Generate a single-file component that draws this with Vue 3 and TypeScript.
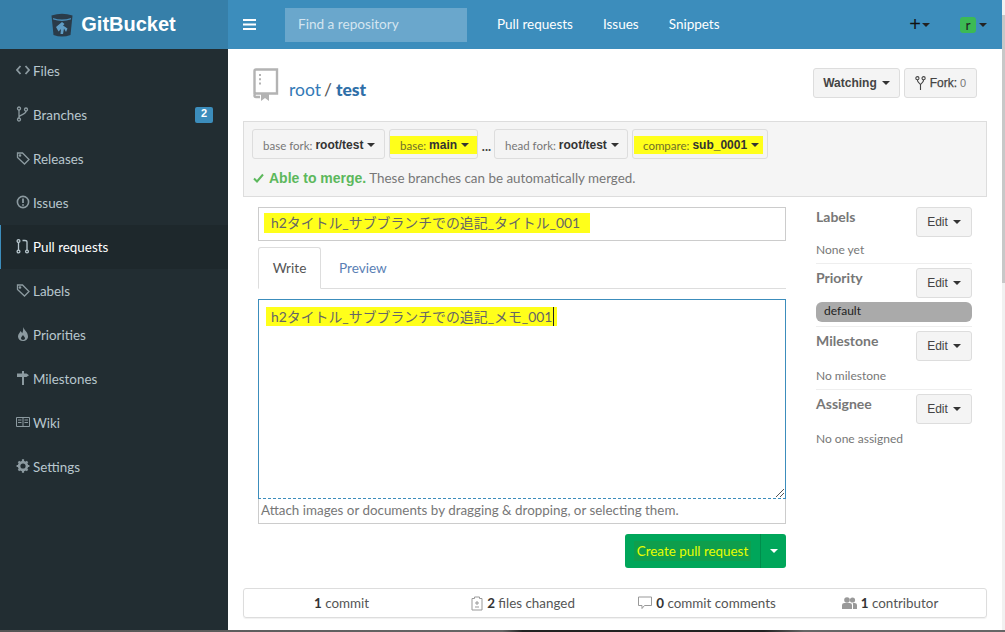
<script setup lang="ts">
const nav = [
  { key: 'code', label: 'Files' },
  { key: 'branch', label: 'Branches', badge: '2' },
  { key: 'tag', label: 'Releases' },
  { key: 'issue', label: 'Issues' },
  { key: 'pr', label: 'Pull requests', active: true },
  { key: 'tag', label: 'Labels' },
  { key: 'flame', label: 'Priorities' },
  { key: 'sign', label: 'Milestones' },
  { key: 'book', label: 'Wiki' },
  { key: 'gear', label: 'Settings' },
]
</script>

<template>
  <div class="page">
    <aside class="side">
      <div class="logo">
        <svg class="bucket" width="22" height="24" viewBox="0 0 22 24">
          <path d="M0.5 2.5 Q11 -1 21.5 2.5 L19.5 22 Q11 25 2.5 22 Z" fill="#2a3b49" />
          <path d="M2 5 Q11 8 20 5 L19.8 6.6 Q11 9.4 2.2 6.6 Z" fill="#4a8db8" />
          <path d="M5 14 L11 9 L13.5 11 L12 12.5 L16.5 15.5 L15 19 L13 15.5 L12 21 L9.5 21 L10 16 L7.5 18.5 Z" fill="#5f9cc4" />
        </svg>
        <span class="brand">GitBucket</span>
      </div>
      <nav class="nav">
        <a v-for="n in nav" :key="n.label" class="item" :class="{ active: n.active }">
          <svg class="ico" width="14" height="16" viewBox="0 0 14 16" fill="none" stroke="currentColor" stroke-width="1.3">
            <template v-if="n.key === 'code'">
              <path d="M4.5 4 L1 8 L4.5 12 M9.5 4 L13 8 L9.5 12" stroke-width="1.8" />
            </template>
            <template v-else-if="n.key === 'branch'">
              <circle cx="3" cy="2.5" r="1.5" /><circle cx="3" cy="13.5" r="1.5" /><circle cx="10" cy="3.5" r="1.5" />
              <path d="M3 4 V12 M10 5 C10 9 4 8 3 11" />
            </template>
            <template v-else-if="n.key === 'tag'">
              <path d="M1.5 3 H6.5 L13 9.5 L8.5 14 L1.5 7.5 Z" />
              <circle cx="4" cy="5.5" r="0.7" />
            </template>
            <template v-else-if="n.key === 'issue'">
              <circle cx="7" cy="8" r="5.6" stroke-width="1.6" />
              <path d="M7 4.5 V9 M7 10.2 V11.8" stroke-width="1.8" />
            </template>
            <template v-else-if="n.key === 'pr'">
              <circle cx="2.5" cy="3" r="1.4" /><circle cx="2.5" cy="13.5" r="1.4" /><circle cx="11" cy="13.5" r="1.4" />
              <path d="M2.5 4.5 V12 M11 12 V4 Q11 2.5 9 2.5 H6.5" />
            </template>
            <template v-else-if="n.key === 'flame'">
              <path d="M7 1 C8 4 12 6 12 10.5 C12 13 10 15 7 15 C4 15 2 13 2 10.5 C2 8 4 7 4.5 5 C5.5 6 6 6.5 6 7.5 C7 6 7.5 3 7 1 Z M7 9 C6 10.5 5 11 5 12.3 C5 13.5 6 14 7 14 C8 14 9 13.5 9 12.3 C9 11 7.8 10.5 7 9 Z" fill="currentColor" fill-rule="evenodd" stroke="none" />
            </template>
            <template v-else-if="n.key === 'sign'">
              <path d="M1 3.5 H10.5 L13 5.2 L10.5 7 H1 Z M6 1 H8 V3.5 H6 Z M6 7 H8 V15 H6 Z" fill="currentColor" stroke="none" />
            </template>
            <template v-else-if="n.key === 'book'">
              <path d="M0.5 3.5 H13.5 V12.5 H0.5 Z M7 3.5 V12.5 M2 6 H5.5 M2 8.5 H5.5 M8.5 6 H12 M8.5 8.5 H12" stroke-width="1" />
            </template>
            <template v-else-if="n.key === 'gear'">
              <circle cx="7" cy="8" r="3.9" stroke-width="2.6" />
              <path d="M7 1.2 V3.2 M7 12.8 V14.8 M0.6 8 H2.6 M11.4 8 H13.4 M2.5 3.5 L3.8 4.8 M10.2 11.2 L11.5 12.5 M2.5 12.5 L3.8 11.2 M10.2 4.8 L11.5 3.5" stroke-width="2.2" />
            </template>
          </svg>
          <span class="label">{{ n.label }}</span>
          <span v-if="n.badge" class="badge">{{ n.badge }}</span>
        </a>
      </nav>
    </aside>

    <div class="right">
      <header class="top">
        <svg class="burger" width="13" height="11" viewBox="0 0 13 11"><path d="M0 1 H13 M0 5.5 H13 M0 10 H13" stroke="#fff" stroke-width="2" /></svg>
        <div class="search">Find a repository</div>
        <a class="tl first">Pull requests</a>
        <a class="tl">Issues</a>
        <a class="tl">Snippets</a>
        <span class="spacer"></span>
        <span class="plus">+</span><i class="caret dark plusc"></i>
        <span class="avatar">r</span><i class="caret dark"></i>
      </header>

      <main class="main">
        <div class="repo">
          <svg class="repoicon" width="26" height="33" viewBox="0 0 26 33" fill="none">
            <path d="M1.5 26 V3 Q1.5 1.5 3 1.5 H24 V25.5 H3 Q1.5 25.5 1.5 27.5 Q1.5 29 3 29 H7" stroke="#b3b3b3" stroke-width="2.4" />
            <path d="M7 6 V18" stroke="#b3b3b3" stroke-width="2" stroke-dasharray="2 2.2" />
            <path d="M8 26 H16 V33 L12 30 L8 33 Z" fill="#b3b3b3" />
          </svg>
          <div class="repotitle"><a class="owner">root</a><span class="sl">/</span><a class="name">test</a></div>
          <span class="spacer"></span>
          <div class="btn small-b watching">Watching <i class="caret"></i></div>
          <div class="btn small-b fork">
            <svg width="11" height="14" viewBox="0 0 11 14" fill="none" stroke="#444" stroke-width="1.1"><circle cx="2.4" cy="2.2" r="1.6" /><circle cx="8.6" cy="2.2" r="1.6" /><path d="M2.4 4 C2.4 7 5.5 7 5.5 9 V14 M8.6 4 C8.6 7 5.5 7 5.5 9" /></svg>
            <span class="forkt">Fork:</span><span class="forkn">0</span>
          </div>
        </div>

        <section class="compare">
          <div class="branches">
            <div class="btn cb w133"><span class="lite">base fork:</span> <b>root/test</b> <i class="caret"></i></div>
            <div class="btn cb w89 hl-wrap"><span class="hl"><span class="lite">base:</span> <b>main</b> <i class="caret"></i></span></div>
            <span class="dots">...</span>
            <div class="btn cb w134"><span class="lite">head fork:</span> <b>root/test</b> <i class="caret"></i></div>
            <div class="btn cb w136 hl-wrap"><span class="hl"><span class="lite">compare:</span> <b>sub_0001</b> <i class="caret"></i></span></div>
          </div>
          <div class="merge">
            <svg width="11" height="10" viewBox="0 0 11 10"><path d="M1 5.5 L4 8.5 L10 1.5" fill="none" stroke="#5cb85c" stroke-width="2" /></svg>
            <b class="ok">Able to merge.</b> <span class="mt">These branches can be automatically merged.</span>
          </div>
        </section>

        <div class="columns">
          <div class="form">
            <div class="titlebox"><span class="yellow titlehl">h2タイトル_サブブランチでの追記_タイトル_001</span></div>
            <div class="tabs">
              <div class="tab on">Write</div>
              <div class="tab prev">Preview</div>
            </div>
            <div class="area">
              <span class="yellow bodyhl">h2タイトル_サブブランチでの追記_メモ_001<i class="cursor"></i></span>
              <svg class="grip" width="10" height="10" viewBox="0 0 10 10"><path d="M1 9 L9 1 M5 9 L9 5" stroke="#555" stroke-width="1" /></svg>
            </div>
            <div class="attach">Attach images or documents by dragging &amp; dropping, or selecting them.</div>
            <div class="submit">
              <div class="create"><span class="createt">Create pull request</span></div>
              <div class="createc"><i class="caret white"></i></div>
            </div>
          </div>

          <aside class="meta">
            <div class="mrow first"><div class="mhead"><b>Labels</b><div class="btn edit">Edit <i class="caret"></i></div></div><div class="mval">None yet</div></div>
            <div class="mrow"><div class="mhead"><b>Priority</b><div class="btn edit">Edit <i class="caret"></i></div></div><div class="pill">default</div></div>
            <div class="mrow"><div class="mhead"><b>Milestone</b><div class="btn edit">Edit <i class="caret"></i></div></div><div class="mval">No milestone</div></div>
            <div class="mrow last"><div class="mhead"><b>Assignee</b><div class="btn edit">Edit <i class="caret"></i></div></div><div class="mval">No one assigned</div></div>
          </aside>
        </div>

        <div class="stats">
          <div class="st s1"><span><b>1</b> commit</span></div>
          <div class="st s2">
            <svg width="12" height="15" viewBox="0 0 12 15" fill="none" stroke="#999" stroke-width="1"><path d="M1 2.5 H3.5 V1 H8.5 V2.5 H11 V14 H1 Z M6 5 V9 M4 7 H8 M4 11 H8" /></svg>
            <span><b>2</b> files changed</span>
          </div>
          <div class="st s3">
            <svg width="14" height="14" viewBox="0 0 14 14" fill="none" stroke="#999" stroke-width="1"><path d="M0.5 1 H13.5 V9.5 H6.5 L4 12.5 V9.5 H0.5 Z" /></svg>
            <span><b>0</b> commit comments</span>
          </div>
          <div class="st s4">
            <svg width="15" height="12" viewBox="0 0 15 12" fill="#999"><circle cx="5" cy="3" r="2.8" /><circle cx="10.5" cy="3" r="2.6" /><path d="M0 12 V8 Q0 6 2.5 6 H7.5 Q10 6 10 8 V12 Z M11 12 V7 Q11 6 10.5 6 H12.5 Q15 6 15 8 V12 Z" /></svg>
            <span><b>1</b> contributor</span>
          </div>
        </div>
      </main>
    </div>
    <div class="scroll"><div class="thumb"></div></div>
    <div class="edge"></div>
  </div>
</template>

<style>
html, body { margin: 0; padding: 0; background: #fff; overflow: hidden; }
</style>

<style scoped>
.page { display: flex; width: 1005px; height: 632px; overflow: hidden; position: relative; font-family: Lato, "Noto Sans CJK JP", sans-serif; font-size: 14px; color: #333; }
.side { width: 228px; flex: none; background: #222d32; display: flex; flex-direction: column; }
.logo { height: 49px; background: #367fa9; display: flex; align-items: center; justify-content: center; gap: 8px; padding-right: 1px; box-sizing: border-box; }
.brand { font: bold 20px "Liberation Sans", Arial, sans-serif; color: #fff; }
.nav { display: flex; flex-direction: column; }
.item { height: 44px; display: flex; align-items: center; padding: 0 15px 0 16px; box-sizing: border-box; color: #b8c7ce; }
.item.active { background: #1e282c; color: #fff; border-left: 1px solid #3c8dbc; padding-left: 15px; }
.ico { color: #8c9aa0; flex: none; margin-right: 3px; margin-top: -2px; }
.active .ico { color: #b8c7ce; }
.label { font-size: 13.4px; margin-top: -1px; }
.badge { margin-left: auto; background: #3c8dbc; color: #fff; font: bold 11px "Liberation Sans", sans-serif; width: 18px; height: 16px; line-height: 13px; text-align: center; border-radius: 2px; }
.right { flex: 1; display: flex; flex-direction: column; min-width: 0; }
.top { height: 49px; flex: none; background: #3c8dbc; display: flex; align-items: center; padding-left: 15px; padding-right: 18px; }
.burger { flex: none; }
.search { width: 182px; height: 34px; margin-left: 29px; background: #6aa7cc; color: #d4e5f0; line-height: 32px; padding-left: 13px; box-sizing: border-box; font-size: 13.6px; }
.tl { color: #fff; margin-left: 30px; font-size: 13.5px; margin-top: -2px; }
.spacer { flex: 1; }
.plus { color: #111; font: 20px "Liberation Sans", sans-serif; line-height: 1; margin-top: -2px; }
.plusc { margin-left: 4px; margin-right: 30px; }
.avatar { width: 16px; height: 16px; background: #3cba54; border-radius: 3px; color: #222; font-size: 14px; line-height: 15px; text-align: center; margin-right: 2px; }
.caret { display: inline-block; width: 0; height: 0; border-left: 4px solid transparent; border-right: 4px solid transparent; border-top: 4px solid #333; vertical-align: middle; margin-left: 1px; }
.caret.dark { border-top-color: #222; }
.caret.white { border-top-color: #fff; margin: 0; }
.main { flex: 1; padding: 19px 18px 0 15px; display: flex; flex-direction: column; }
.repo { height: 37px; display: flex; align-items: center; padding-left: 10px; padding-right: 10px; flex: none; }
.repoicon { margin-right: 10px; margin-top: -4px; }
.repotitle { font-size: 17.5px; color: #333; margin-top: 5px; }
.owner { color: #337ab7; }
.sl { color: #555; margin: 0 4px 0 3px; }
.name { color: #2f6fa8; font-weight: 900; }
.btn { background: #f4f4f4; border: 1px solid #ddd; border-radius: 3px; box-sizing: border-box; display: flex; align-items: center; color: #444; white-space: nowrap; }
.small-b { height: 30px; font: bold 12px "Liberation Sans", sans-serif; margin-top: -8px; justify-content: center; padding-top: 1px; }
.watching { width: 87px; gap: 4px; margin-right: 4px; color: #444; }
.fork { width: 73px; gap: 4px; font-weight: 400; }
.forkt { font: 12px/1 "Liberation Sans", sans-serif; color: #444; -webkit-text-stroke: 0.25px #444; }
.forkn { font: 11px/1 "Liberation Sans", sans-serif; color: #777; margin-left: -1px; }
.compare { margin-top: 16px; width: 744px; height: 76px; box-sizing: border-box; background: #f5f5f5; border: 1px solid #ddd; padding: 7px 8px; flex: none; }
.branches { display: flex; align-items: center; height: 30px; }
.cb { height: 30px; font-size: 11.5px; padding: 2px 0 0 10px; margin-right: 4px; gap: 3px; }
.cb b { font-family: "Liberation Sans", sans-serif; font-weight: 700; color: #333; font-size: 12px; }
.lite { color: #777; }
.w133 { width: 133px; } .w89 { width: 89px; padding-left: 0; } .w134 { width: 134px; } .w136 { width: 136px; padding-left: 1px; }
.hl-wrap { justify-content: flex-start; }
.hl { background: #ffff1a; height: 18px; display: flex; align-items: center; gap: 3px; }
.w89 .hl { width: 90px; padding-left: 10px; box-sizing: border-box; }
.w136 .hl { width: 129px; padding-left: 9px; box-sizing: border-box; }
.hl .lite { color: #6f6f2a; }
.dots { width: 13px; margin-left: -2px; margin-right: 1px; text-align: center; font-weight: 700; font-size: 13px; color: #444; line-height: 1; margin-top: 4px; }
.merge { margin-top: 11px; padding-left: 1px; display: flex; align-items: center; gap: 4px; white-space: pre; }
.ok { color: #5cb85c; font-weight: 700; font-family: "Liberation Sans", sans-serif; font-size: 14px; margin-left: 1px; }
.mt { color: #777; font-size: 13.4px; margin-left: -1px; }
.columns { display: flex; padding-left: 15px; margin-top: 10px; flex: none; }
.form { width: 528px; flex: none; display: flex; flex-direction: column; }
.titlebox { height: 34px; border: 1px solid #ccc; box-sizing: border-box; padding-left: 5px; display: flex; align-items: center; }
.yellow { background: #ffff1a; color: #666; display: inline-block; font-size: 13.9px; white-space: nowrap; }
.titlehl { padding: 0 7px; width: 326px; box-sizing: border-box; margin-top: -3px; line-height: 20px; height: 20px; }
.tabs { display: flex; margin-top: 6px; height: 41px; border-bottom: 1px solid #ddd; }
.tab { height: 41px; box-sizing: border-box; line-height: 42px; text-align: center; color: #5a7fb5; font-size: 13.6px; }
.tab.on { width: 63px; color: #555; background: #fff; border: 1px solid #ddd; border-bottom: 1px solid #fff; border-radius: 3px 3px 0 0; height: 42px; line-height: 41px; }
.tab.prev { margin-left: 18px; }
.area { margin-top: 10px; height: 200px; border: 1px solid #3c8dbc; border-bottom: 1px dashed #3c8dbc; box-sizing: border-box; padding: 7px 0 0 7px; position: relative; flex: none; }
.bodyhl { padding: 0 5px; width: 291px; box-sizing: border-box; line-height: 19px; height: 19px; position: relative; vertical-align: top; }
.cursor { position: absolute; right: 3px; top: 0; width: 1px; height: 19px; background: #222; }
.grip { position: absolute; right: 0; bottom: 0; }
.attach { height: 25px; border: 1px solid #ccc; border-top: 0; box-sizing: border-box; line-height: 23px; padding-left: 2px; font-size: 13.4px; color: #777; white-space: nowrap; }
.submit { display: flex; justify-content: flex-end; margin-top: 10px; }
.create { width: 136px; height: 34px; background: #00a65a; border-radius: 3px 0 0 3px; display: flex; align-items: center; justify-content: center; border-right: 1px solid #008d4c; box-sizing: border-box; }
.createt { color: #e8ff00; background: #0f9e4c; font-size: 13.4px; padding: 2px 3px; white-space: nowrap; }
.createc { width: 25px; height: 34px; background: #00a65a; border-radius: 0 3px 3px 0; display: flex; align-items: center; justify-content: center; }
.meta { margin-left: 30px; width: 156px; flex: none; }
.mrow { border-bottom: 1px solid #eee; margin-bottom: 4px; }
.mrow.last { border-bottom: 0; }
.mhead { display: flex; justify-content: space-between; align-items: flex-start; height: 30px; margin-bottom: 4px; }
.mhead b { font-size: 14px; color: #777; font-weight: 700; margin-top: 1px; }
.edit { width: 56px; height: 30px; font: 12px "Liberation Sans", sans-serif; justify-content: center; gap: 4px; }
.mval { font-size: 12px; color: #777; line-height: 17px; height: 24px; padding-top: 2px; box-sizing: border-box; }
.first .mval { height: 22px; padding-top: 0; }
.pill { background: #aaa; border-radius: 6px; height: 20px; line-height: 18px; font-size: 12px; color: #222; padding-left: 8px; margin-bottom: 4px; }
.stats { margin-top: 20px; width: 744px; height: 30px; border: 1px solid #ddd; border-radius: 3px; box-sizing: border-box; display: grid; grid-template-columns: 186px 186px 186px 186px; align-items: center; flex: none; box-shadow: 0 1px 1px rgba(0,0,0,.06); }
.st { font-size: 13.4px; color: #555; display: flex; align-items: center; justify-content: center; gap: 4px; white-space: pre; }
.st b { color: #333; font-weight: 700; }
.s1 { padding-left: 9px; }
.s3 { padding-right: 4px; }
.s4 { padding-right: 10px; }
.scroll { position: absolute; right: 0; top: 0; width: 3px; height: 632px; background: #f1f1f1; }
.thumb { margin-top: 15px; height: 268px; background: #c8c8c8; }
.edge { position: absolute; left: 0; bottom: 0; width: 1005px; height: 2px; background: linear-gradient(90deg, #555 0, #666 50%, #222 52%, #222 76%, #666 80%, #666 100%); }
</style>
